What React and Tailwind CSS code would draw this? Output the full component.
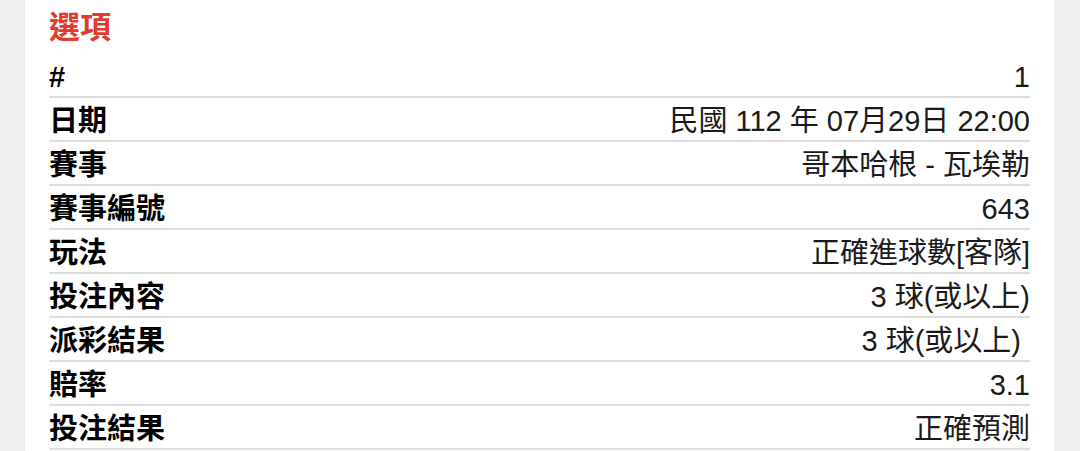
import React from 'react';

const rows = [
    ['#', '1'],
    ['日期', '民國 112 年 07月29日 22:00'],
    ['賽事', '哥本哈根 - 瓦埃勒'],
    ['賽事編號', '643'],
    ['玩法', '正確進球數[客隊]'],
    ['投注內容', '3 球(或以上)'],
    ['派彩結果', '3 球(或以上)', true],
    ['賠率', '3.1'],
    ['投注結果', '正確預測'],
];

const App = () => {
    return (
        <div
            className="min-h-[451px] bg-[#efefef] flex"
            style={{ fontFamily: '"Liberation Sans", "Noto Sans CJK TC", sans-serif' }}
        >
            <div className="ml-[25px] w-[1029px] bg-white px-[24px]">
                <div className="h-[54px] pt-[8px]">
                    <h2 className="text-[31px] leading-[40px] font-bold text-[#e23a2e]">選項</h2>
                </div>
                {rows.map(([label, value, pad], index) => (
                    <div
                        key={index}
                        className="h-[44px] pt-[3px] flex items-center justify-between border-b-2 border-[#dedede]"
                    >
                        <span className="text-[29px] leading-[38px] font-bold text-black">{label}</span>
                        <span className={`text-[29px] leading-[38px] text-[#1a1a1a] ${pad ? 'pr-[9px]' : ''}`}>{value}</span>
                    </div>
                ))}
            </div>
        </div>
    );
};

export default App;
